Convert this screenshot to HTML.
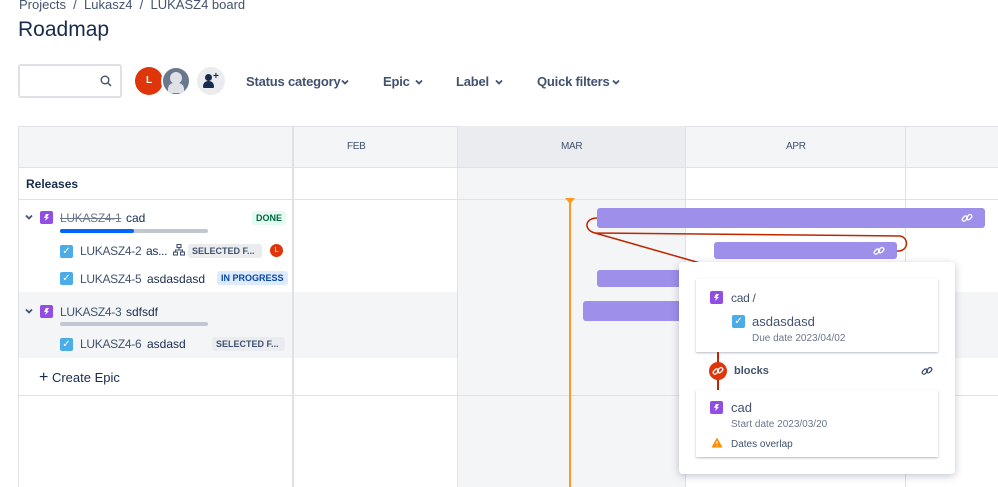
<!DOCTYPE html>
<html><head><meta charset="utf-8"><style>
*{box-sizing:border-box;margin:0;padding:0}
body{width:998px;height:487px;overflow:hidden;background:#fff;font-family:"Liberation Sans",sans-serif;color:#172b4d;position:relative}
.a{position:absolute}
.t{font-size:12px;color:#42526e;letter-spacing:-0.3px}
.ep{width:13px;height:13px;background:#904ee2;border-radius:2px}
.ep::after{content:"";position:absolute;left:4px;top:3px;width:5px;height:7px;background:#fff;clip-path:polygon(40% 0,100% 0,60% 45%,100% 45%,20% 100%,40% 55%,0 55%)}
.cb{width:13px;height:13px;background:#4bade8;border-radius:2px;color:#fff;font-size:10px;text-align:center;line-height:13px}
.lz{font-size:9px;font-weight:bold;padding:2px 4px;border-radius:3px}
.bar{background:#9d8fea;border-radius:3px}
.f{top:74px;font-size:13px;font-weight:bold;color:#42526e;letter-spacing:-0.2px}
</style></head><body>
<svg width="0" height="0" style="position:absolute"><defs>
<symbol id="chev" viewBox="0 0 10 10"><path d="M2 3.5 L5 6.5 L8 3.5" fill="none" stroke="currentColor" stroke-width="1.8"/></symbol>
<symbol id="lnk" viewBox="0 0 12 12"><g fill="none" stroke="currentColor" stroke-width="1.3"><rect x="0.8" y="4.8" width="6" height="3.6" rx="1.8" transform="rotate(-45 3.8 6.6)"/><rect x="5.2" y="3.4" width="6" height="3.6" rx="1.8" transform="rotate(-45 8.2 5.2)"/></g></symbol>
</defs></svg>
<div class="a" style="left:19px;top:-3px;font-size:13px;color:#42526e">Projects &nbsp;/&nbsp; Lukasz4 &nbsp;/&nbsp; LUKASZ4 board</div>
<div class="a" style="left:18px;top:18px;font-size:21px;color:#172b4d">Roadmap</div>
<div class="a" style="left:18px;top:64px;width:104px;height:34px;border:2px solid #dfe1e6;border-radius:3px"></div>
<svg class="a" style="left:100px;top:75px" width="12" height="12"><circle cx="5" cy="5" r="3.8" fill="none" stroke="#42526e" stroke-width="1.4"/><path d="M8 8 L11 11" stroke="#42526e" stroke-width="1.5"/></svg>
<div class="a" style="left:135px;top:67px;width:28px;height:28px;border-radius:50%;background:#de350b;color:#fff;font-size:10px;font-weight:bold;text-align:center;line-height:28px">L</div>
<div class="a" style="left:161px;top:66px;width:30px;height:30px;border-radius:50%;background:#6b778c;border:2px solid #fff;overflow:hidden"><div class="a" style="left:7px;top:4px;width:12px;height:12px;border-radius:50%;background:#dfe1e6"></div><div class="a" style="left:5px;top:15px;width:16px;height:10px;border-radius:6px 6px 2px 2px;background:#dfe1e6"></div></div>
<div class="a" style="left:197px;top:67px;width:28px;height:28px;border-radius:50%;background:#ebecf0"><div class="a" style="left:8px;top:7px;width:7px;height:7px;border-radius:50%;background:#172b4d"></div><div class="a" style="left:6px;top:14px;width:11px;height:7px;border-radius:5px 5px 1px 1px;background:#172b4d"></div><div class="a" style="left:16px;top:4px;font-size:10px;font-weight:bold">+</div></div>
<div class="a f" style="left:246px">Status category</div><svg class="a" style="left:340px;top:77px;color:#42526e" width="10" height="10"><use href="#chev"/></svg>
<div class="a f" style="left:383px">Epic</div><svg class="a" style="left:414px;top:77px;color:#42526e" width="10" height="10"><use href="#chev"/></svg>
<div class="a f" style="left:456px">Label</div><svg class="a" style="left:494px;top:77px;color:#42526e" width="10" height="10"><use href="#chev"/></svg>
<div class="a f" style="left:537px">Quick filters</div><svg class="a" style="left:611px;top:77px;color:#42526e" width="10" height="10"><use href="#chev"/></svg>

<div class="a" style="left:18px;top:126px;width:980px;height:42px;background:#f4f5f7;border:1px solid #dfe1e6;border-right:none"></div>
<div class="a" style="left:457px;top:126px;width:228px;height:361px;background:#f4f5f7"></div>
<div class="a" style="left:457px;top:126px;width:228px;height:42px;background:#ebecf0"></div>
<div class="a" style="left:18px;top:292px;width:980px;height:66px;background:#f4f5f7"></div>
<div class="a" style="left:18px;top:126px;width:1px;height:361px;background:#dfe1e6"></div>
<div class="a" style="left:292px;top:126px;width:2px;height:361px;background:#dfe1e6"></div>
<div class="a" style="left:457px;top:126px;width:1px;height:361px;background:#dfe1e6"></div>
<div class="a" style="left:685px;top:126px;width:1px;height:361px;background:#dfe1e6"></div>
<div class="a" style="left:905px;top:126px;width:1px;height:361px;background:#dfe1e6"></div>
<div class="a" style="left:18px;top:167px;width:980px;height:1px;background:#dfe1e6"></div>
<div class="a" style="left:18px;top:199px;width:980px;height:1px;background:#dfe1e6"></div>
<div class="a" style="left:18px;top:395px;width:980px;height:1px;background:#dfe1e6"></div>
<div class="a t" style="left:347px;top:141px;font-size:10px">FEB</div>
<div class="a t" style="left:561px;top:141px;font-size:10px">MAR</div>
<div class="a t" style="left:786px;top:141px;font-size:10px">APR</div>
<div class="a" style="left:26px;top:177px;font-size:12px;font-weight:bold">Releases</div>

<svg class="a" style="left:24px;top:212px;color:#42526e" width="10" height="10"><use href="#chev"/></svg>
<div class="a ep" style="left:40px;top:211px"></div>
<div class="a t" style="left:60px;top:211px;text-decoration:line-through;color:#6b778c">LUKASZ4-1</div>
<div class="a" style="left:126px;top:211px;font-size:12px">cad</div>
<div class="a" style="left:60px;top:229px;width:148px;height:4px;background:#c1c7d0;border-radius:2px"><div style="width:74px;height:4px;background:#0065ff;border-radius:2px"></div></div>
<div class="a lz" style="left:252px;top:211px;background:#e3fcef;color:#006644">DONE</div>
<div class="a cb" style="left:60px;top:245px">&#10003;</div>
<div class="a t" style="left:80px;top:244px">LUKASZ4-2</div>
<div class="a" style="left:146px;top:244px;font-size:12px;letter-spacing:-0.3px">as...</div>
<svg class="a" style="left:173px;top:244px" width="12" height="12"><g fill="none" stroke="#42526e" stroke-width="1.1"><rect x="4" y="0.5" width="4" height="3"/><rect x="0.5" y="8" width="4" height="3"/><rect x="7.5" y="8" width="4" height="3"/><path d="M6 3.5V6M2.5 8V6H9.5V8"/></g></svg>
<div class="a lz" style="left:188px;top:244px;background:#ebecf0;color:#42526e;width:74px;white-space:nowrap;overflow:hidden">SELECTED F...</div>
<div class="a" style="left:270px;top:244px;width:13px;height:13px;border-radius:50%;background:#de350b;color:#fff;font-size:7px;text-align:center;line-height:13px">L</div>
<div class="a cb" style="left:60px;top:272px">&#10003;</div>
<div class="a t" style="left:80px;top:272px">LUKASZ4-5</div>
<div class="a" style="left:147px;top:272px;font-size:12px">asdasdasd</div>
<div class="a lz" style="left:217px;top:271px;background:#deebff;color:#0747a6">IN PROGRESS</div>
<svg class="a" style="left:24px;top:306px;color:#42526e" width="10" height="10"><use href="#chev"/></svg>
<div class="a ep" style="left:40px;top:305px"></div>
<div class="a t" style="left:60px;top:305px">LUKASZ4-3</div>
<div class="a" style="left:126px;top:305px;font-size:12px">sdfsdf</div>
<div class="a" style="left:60px;top:322px;width:148px;height:4px;background:#c1c7d0;border-radius:2px"></div>
<div class="a cb" style="left:60px;top:338px">&#10003;</div>
<div class="a t" style="left:80px;top:337px">LUKASZ4-6</div>
<div class="a" style="left:147px;top:337px;font-size:12px">asdasd</div>
<div class="a lz" style="left:212px;top:337px;background:#ebecf0;color:#42526e;width:73px;white-space:nowrap;overflow:hidden">SELECTED F...</div>
<div class="a" style="left:39px;top:369px;font-size:13px;color:#172b4d"><span style="font-size:16px">+</span> Create Epic</div>

<div class="a bar" style="left:597px;top:208px;width:388px;height:20px"></div>
<svg class="a" style="left:961px;top:212px;color:#fff" width="12" height="12"><use href="#lnk"/></svg>
<div class="a bar" style="left:714px;top:242px;width:183px;height:17px"></div>
<svg class="a" style="left:873px;top:245px;color:#fff" width="12" height="12"><use href="#lnk"/></svg>
<div class="a bar" style="left:597px;top:270px;width:100px;height:17px"></div>
<div class="a bar" style="left:583px;top:301px;width:110px;height:20px"></div>
<div class="a" style="left:569px;top:200px;width:2px;height:287px;background:#ff991f"></div>
<div class="a" style="left:565px;top:198px;border:5px solid transparent;border-top:6px solid #ff991f"></div>
<svg class="a" style="left:0;top:0" width="998" height="487"><path d="M597 218 C585 218 583 230 595 233 L700 263 M595 233 L900 236 C910 238 908 252 897 251" fill="none" stroke="#bf2600" stroke-width="1.5"/></svg>

<div class="a" style="left:679px;top:262px;width:276px;height:212px;background:#fff;border-radius:4px;box-shadow:0 2px 8px rgba(9,30,66,.25)"></div>
<div class="a" style="left:696px;top:279px;width:242px;height:73px;background:#fff;box-shadow:0 1px 2px rgba(9,30,66,.3)"></div>
<div class="a ep" style="left:710px;top:291px"></div>
<div class="a t" style="left:731px;top:291px">cad /</div>
<div class="a cb" style="left:732px;top:315px">&#10003;</div>
<div class="a" style="left:752px;top:314px;font-size:13px;color:#42526e">asdasdasd</div>
<div class="a" style="left:752px;top:333px;font-size:10px;color:#6b778c">Due date 2023/04/02</div>
<div class="a" style="left:717px;top:352px;width:2px;height:38px;background:#bf2600"></div>
<div class="a" style="left:709px;top:362px;width:18px;height:18px;border-radius:50%;background:#de350b"></div>
<svg class="a" style="left:712px;top:365px;color:#fff" width="12" height="12"><use href="#lnk"/></svg>
<div class="a" style="left:734px;top:365px;font-size:11px;font-weight:bold;color:#42526e">blocks</div>
<svg class="a" style="left:921px;top:365px;color:#42526e" width="12" height="12"><use href="#lnk"/></svg>
<div class="a" style="left:696px;top:390px;width:242px;height:67px;background:#fff;box-shadow:0 1px 2px rgba(9,30,66,.3)"></div>
<div class="a ep" style="left:710px;top:401px"></div>
<div class="a" style="left:731px;top:400px;font-size:13px;color:#42526e">cad</div>
<div class="a" style="left:731px;top:419px;font-size:10px;color:#6b778c">Start date 2023/03/20</div>
<svg class="a" style="left:711px;top:437px" width="12" height="11"><path d="M6 0.5 L11.5 10.5 H0.5Z" fill="#ff8b00"/><path d="M6 4V7M6 8.3V9.3" stroke="#fff" stroke-width="1.2"/></svg>
<div class="a" style="left:731px;top:439px;font-size:10px;color:#42526e">Dates overlap</div>
</body></html>
